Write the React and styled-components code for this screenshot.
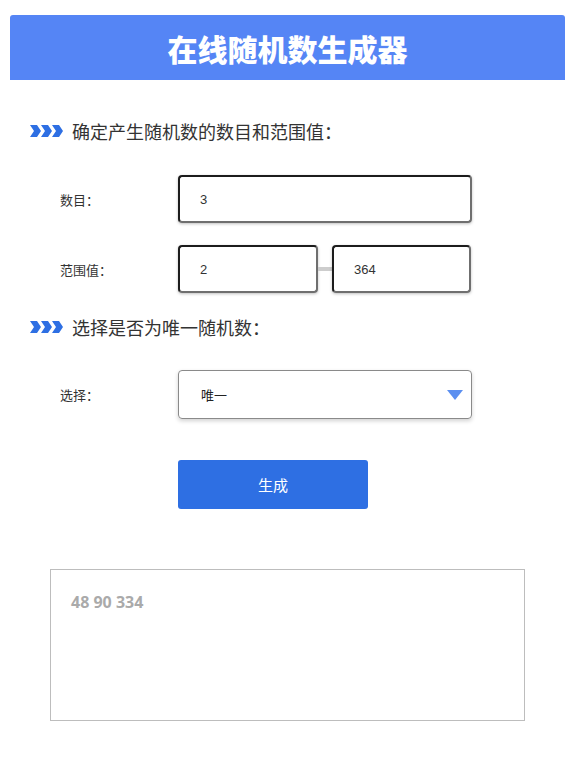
import React from "react";
import styled, { createGlobalStyle } from "styled-components";

const GlobalStyle = createGlobalStyle`
  body {
    margin: 0;
    background: #fff;
    font-family: "Noto Sans CJK SC", "Noto Sans", sans-serif;
  }
`;

const StyledPage = styled.div`
  width: 582px;
  display: flex;
  flex-direction: column;
`;

// Header
const StyledHeader = styled.div`
  margin: 15px 0 0 10px;
  width: 555px;
  height: 65px;
  background-color: #5585f5;
  border-radius: 3px 3px 0 0;
  display: flex;
  align-items: center;
  justify-content: center;
  color: #fff;
  font-size: 30px;
  font-weight: 900;
`;

// Section heading
const StyledSectionTitle = styled.div`
  display: flex;
  align-items: center;
  gap: 9px;
  margin-left: 30px;
  margin-top: ${(p) => p.$top}px;
  height: 26px;
  font-size: 18px;
  color: #333;
`;

const StyledForm = styled.div`
  display: flex;
  flex-direction: column;
`;

const StyledRow = styled.div`
  display: flex;
  align-items: center;
  margin-top: ${(p) => p.$top}px;
`;

const StyledLabel = styled.div`
  width: 118px;
  padding-left: 60px;
  font-size: 13px;
  color: #333;
`;

const StyledInput = styled.div`
  box-sizing: border-box;
  width: ${(p) => p.$width}px;
  height: 48px;
  border: 2px solid;
  border-color: #1c1c1c #6f6f6f #6f6f6f #1c1c1c;
  border-radius: 4px;
  box-shadow: 0 1px 3px rgba(0, 0, 0, 0.25);
  display: flex;
  align-items: center;
  padding-left: 20px;
  font-family: "Liberation Sans", Arial, sans-serif;
  font-size: 13px;
  color: #333;
`;

const StyledDash = styled.div`
  width: 14px;
  height: 4px;
  background: #cdcdcd;
  flex-shrink: 0;
`;

const StyledSelect = styled.div`
  box-sizing: border-box;
  width: 294px;
  height: 49px;
  border: 1px solid #8a8a8a;
  border-radius: 4px;
  box-shadow: 0 2px 4px rgba(0, 0, 0, 0.18);
  display: flex;
  align-items: center;
  justify-content: space-between;
  padding: 0 8px 0 22px;
  font-size: 13px;
  color: #222;
`;

const StyledTriangle = styled.div`
  width: 0;
  height: 0;
  border-left: 8px solid transparent;
  border-right: 8px solid transparent;
  border-top: 10px solid #5b8ff0;
`;

const StyledButton = styled.button`
  margin: 41px 0 0 178px;
  width: 190px;
  height: 49px;
  border: none;
  border-radius: 3px;
  background-color: #2e6fe3;
  color: #fff;
  font-family: "Noto Sans CJK SC", sans-serif;
  font-size: 15px;
`;

const StyledResult = styled.div`
  box-sizing: border-box;
  margin: 60px 0 0 50px;
  width: 475px;
  height: 152px;
  border: 1px solid #bdbdbd;
  padding: 21px 20px;
  font-family: "Open Sans", sans-serif;
  font-weight: 700;
  font-size: 16px;
  color: #aaa;
`;

function Arrows() {
  return (
    <svg width="33" height="14" viewBox="0 0 33 14">
      {[0, 11, 22].map((x) => (
        <path
          key={x}
          d={`M${x} 1 L${x + 7} 1 L${x + 11} 7 L${x + 7} 13 L${x} 13 L${x + 4} 7 Z`}
          fill="#2e6fe3"
        />
      ))}
    </svg>
  );
}

export default function App() {
  return (
    <StyledPage>
      <GlobalStyle />
      <StyledHeader>在线随机数生成器</StyledHeader>

      <StyledSectionTitle $top={38}>
        <Arrows />
        确定产生随机数的数目和范围值：
      </StyledSectionTitle>

      <StyledForm>
        <StyledRow $top={31}>
          <StyledLabel>数目：</StyledLabel>
          <StyledInput $width={294}>3</StyledInput>
        </StyledRow>
        <StyledRow $top={22}>
          <StyledLabel>范围值：</StyledLabel>
          <StyledInput $width={140}>2</StyledInput>
          <StyledDash />
          <StyledInput $width={139}>364</StyledInput>
        </StyledRow>
      </StyledForm>

      <StyledSectionTitle $top={21}>
        <Arrows />
        选择是否为唯一随机数：
      </StyledSectionTitle>

      <StyledRow $top={30}>
        <StyledLabel>选择：</StyledLabel>
        <StyledSelect>
          唯一
          <StyledTriangle />
        </StyledSelect>
      </StyledRow>

      <StyledButton>生成</StyledButton>

      <StyledResult>48 90 334</StyledResult>
    </StyledPage>
  );
}
